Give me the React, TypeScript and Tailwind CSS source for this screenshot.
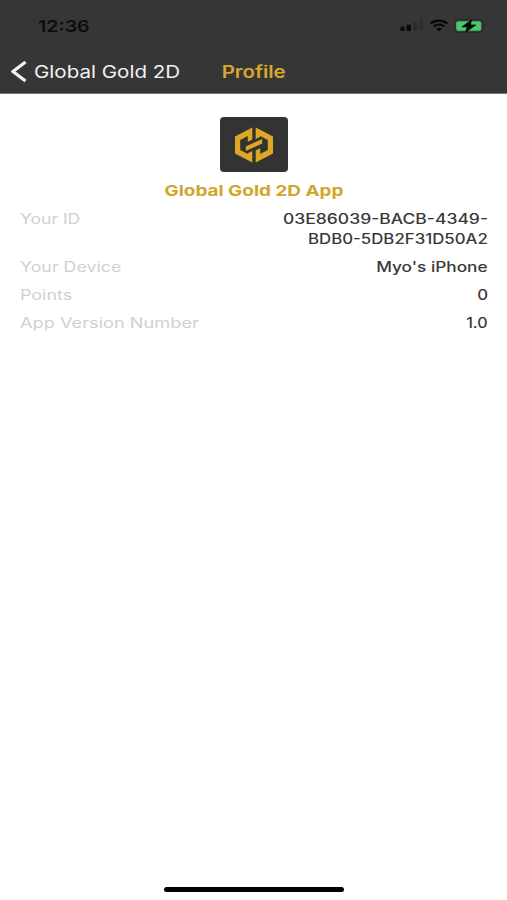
import type { ReactNode } from 'react'

const FONT = "font-['Inter',sans-serif]"

function SignalIcon() {
  return (
    <svg width="24" height="13" viewBox="0 0 24 13" aria-hidden="true">
      <rect x="0.5" y="7.5" width="4" height="4.5" rx="1" fill="#0a0a0a" />
      <rect x="6.5" y="5.5" width="4.5" height="6.5" rx="1" fill="#0a0a0a" />
      <rect x="13" y="3" width="4" height="9" rx="1" fill="#2b2b2b" />
      <rect x="19.2" y="1" width="4" height="11" rx="1" fill="#2d2d2d" />
    </svg>
  )
}

function WifiIcon() {
  return (
    <svg width="20" height="13" viewBox="0 0 20 13" fill="none" stroke="#070707" aria-hidden="true">
      <path d="M1.5 4.6C6 .5 14 .5 18.5 4.6" strokeWidth="2.2" />
      <path d="M4.6 7.5c3.2-2.6 7.6-2.6 10.8 0" strokeWidth="2.2" />
      <path d="M7 9.9c1.8-1.4 4.2-1.4 6 0L10 12.4z" fill="#070707" stroke="none" />
    </svg>
  )
}

function BatteryIcon() {
  return (
    <svg width="32" height="14" viewBox="0 0 32 14" aria-hidden="true">
      <rect x="0.5" y="0.5" width="28.5" height="13" rx="3.5" fill="none" stroke="#2a2a2a" />
      <rect x="2.2" y="2.2" width="25" height="9.6" rx="2" fill="#48c86c" />
      <path d="M30.2 4.8c1.4.5 1.4 3.9 0 4.4z" fill="#2a2a2a" />
      <path d="M17.5 1 8 7.8h5.2L11.8 13l10-7h-5.5z" fill="#050505" stroke="#050505" strokeWidth="0.8" />
    </svg>
  )
}

function Logo() {
  return (
    <svg width="40" height="36" viewBox="0 0 40 36" fill="#dca826" aria-hidden="true">
      <path d="M18.3.5 1 9.6v16.8l17.3 9.1V24l-4.5 2.3v.7L6.200 23V13l7.600-4v5.800l4.500-2.300z" />
      <path d="M21.700.5 39 9.600v16.800l-17.300 9.100v-12l4.500-2.300V27l7.600-4V13l-7.600-4v.7L21.700 12z" />
      <path d="M11.800 19.600v4.400l16.400-7.600V12z" />
    </svg>
  )
}

function Row({ label, labelScale, children }: { label: string; labelScale: string; children: ReactNode }) {
  return (
    <div className="flex items-start justify-between leading-5">
      <span className={`origin-left whitespace-nowrap text-[#d0d0d0] ${labelScale}`}>{label}</span>
      <span className="flex flex-col items-end whitespace-nowrap font-medium text-[#383838]">{children}</span>
    </div>
  )
}

export default function App() {
  return (
    <div className={`flex h-[900px] w-[507px] flex-col overflow-hidden bg-white text-sm ${FONT}`}>
      <header className="flex h-[94px] flex-col border-b border-[#777] bg-[#363636]">
        <div className="flex h-[51px] items-center justify-between pr-[21px] pl-[38px]">
          <span className="origin-left scale-x-[1.22] text-base font-semibold text-[#0c0c0c]">12:36</span>
          <div className="flex items-center gap-[5px]">
            <SignalIcon />
            <WifiIcon />
            <BatteryIcon />
          </div>
        </div>
        <div className="grid h-[41px] grid-cols-[1fr_auto_1fr] items-center">
          <div className="flex items-center pl-[11px] text-[#f2f2f2]">
            <svg width="16" height="22" viewBox="0 0 16 22" fill="none" stroke="currentColor" strokeWidth="3.2" aria-hidden="true">
              <path d="M14.5 1 2 10.5 14.5 20" />
            </svg>
            <span className="ml-[7px] origin-left scale-x-[1.21] pt-0.5 whitespace-nowrap text-[17px]">Global Gold 2D</span>
          </div>
          <h1 className="scale-x-[1.2] pt-0.5 text-[17px] font-semibold text-[#d9a62e]">Profile</h1>
        </div>
      </header>

      <main className="flex flex-1 flex-col items-center pt-[23px]">
        <div className="flex h-[55px] w-[68px] items-center justify-center rounded bg-[#333]">
          <Logo />
        </div>
        <h2 className="mt-[9px] scale-x-[1.26] text-[15px] leading-5 font-bold text-[#d0a62c]">Global Gold 2D App</h2>
        <div className="mt-2 flex w-full flex-col gap-2 pr-[19px] pl-5">
          <Row label="Your ID" labelScale="scale-x-[1.25]">
            <span className="origin-right scale-x-[1.25]">03E86039-BACB-4349-</span>
            <span className="origin-right scale-x-[1.2]">BDB0-5DB2F31D50A2</span>
          </Row>
          <Row label="Your Device" labelScale="scale-x-[1.27]">
            <span className="origin-right scale-x-[1.23]">Myo's iPhone</span>
          </Row>
          <Row label="Points" labelScale="scale-x-[1.28]">
            <span className="origin-right scale-x-[1.2]">0</span>
          </Row>
          <Row label="App Version Number" labelScale="scale-x-[1.3]">
            <span className="origin-right scale-x-[1.15]">1.0</span>
          </Row>
        </div>
      </main>

      <footer className="flex h-[13px] justify-center">
        <div className="ml-px h-[5px] w-[180px] rounded-full bg-black" />
      </footer>
    </div>
  )
}
